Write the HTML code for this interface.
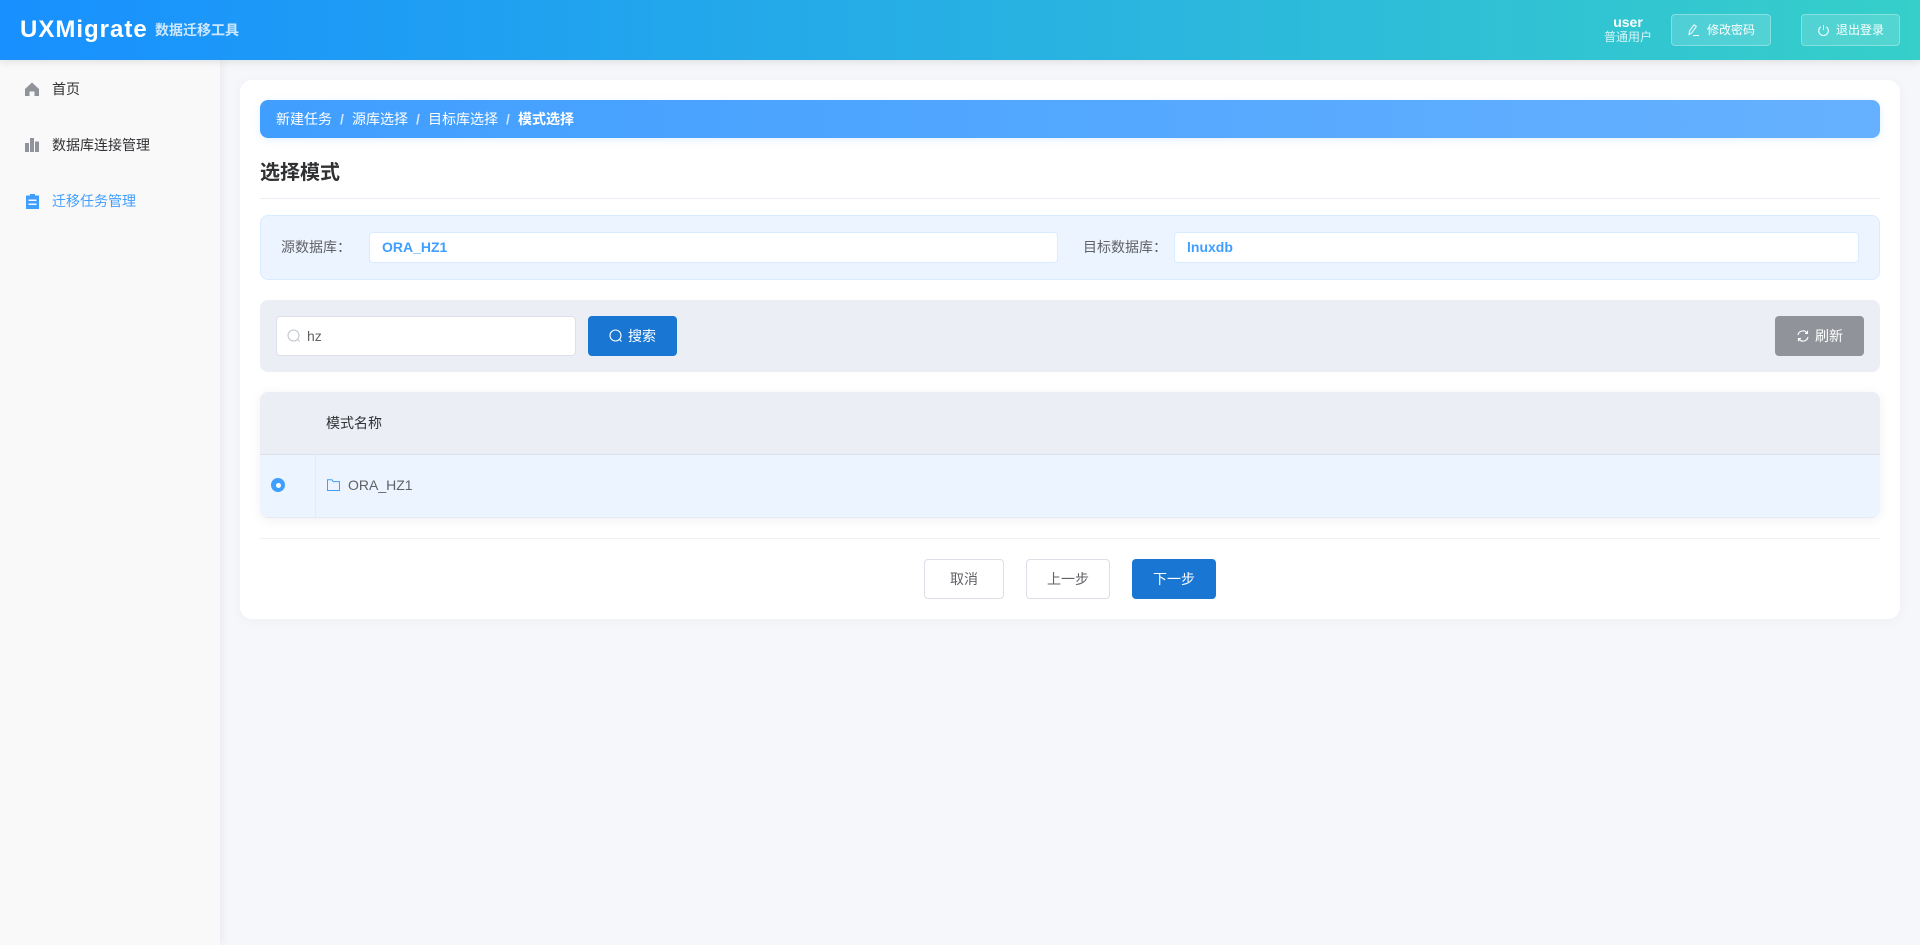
<!DOCTYPE html>
<html lang="zh">
<head>
<meta charset="utf-8">
<title>UXMigrate</title>
<style>
*{box-sizing:border-box;margin:0;padding:0}
html,body{width:1920px;height:945px;overflow:hidden}
body{position:relative;background:#f5f7fa;font-family:"Liberation Sans","Noto Sans CJK SC",sans-serif;font-size:14px;color:#303133}
.a{position:absolute}
.t{position:absolute;white-space:nowrap;line-height:20px}
svg{display:block}
.hdr{left:0;top:0;width:1920px;height:60px;background:linear-gradient(90deg,#1890ff,#36cfc9);box-shadow:0 2px 8px rgba(0,0,0,.1);z-index:3}
.side{left:0;top:60px;width:220px;height:885px;background:#f9f9fa;box-shadow:2px 0 8px rgba(0,0,0,.06);z-index:2}
.hbtn{position:absolute;top:14px;height:32px;background:rgba(255,255,255,.15);border:1px solid rgba(255,255,255,.3);border-radius:4px}
.card{left:240px;top:80px;width:1660px;height:539px;background:#fff;border-radius:12px;box-shadow:0 2px 12px rgba(0,0,0,.04)}
.btn{position:absolute;border-radius:4px;font-size:14px;line-height:20px}
</style>
</head>
<body>
<div class="a hdr">
  <div class="t" style="left:20px;top:15px;font-size:24px;line-height:30px;font-weight:700;color:#fff;letter-spacing:1px">UXMigrate</div>
  <div class="t" style="left:155px;top:20px;font-size:14px;color:rgba(255,255,255,.78);font-weight:700">数据迁移工具</div>
  <div class="t" style="left:1588px;width:80px;text-align:center;top:12px;font-size:14px;font-weight:700;color:#fff">user</div>
  <div class="t" style="left:1588px;width:80px;text-align:center;top:27px;font-size:12px;color:rgba(255,255,255,.8)">普通用户</div>
  <div class="hbtn" style="left:1671px;width:100px">
    <svg class="a" style="left:16px;top:9px" width="12" height="12" viewBox="0 0 12 12" fill="none" stroke="#fff" stroke-width="1"><path d="M1 10.5 1.5 7 6 .8 8.3 2.5 3.8 8.8Z"/><path d="M5 11.5h6"/></svg>
    <div class="t" style="left:35px;top:5px;font-size:12px;color:#fff">修改密码</div>
  </div>
  <div class="hbtn" style="left:1801px;width:99px">
    <svg class="a" style="left:15px;top:9px" width="13" height="13" viewBox="0 0 13 13" fill="none" stroke="#fff" stroke-width="1"><path d="M6.5 1v5"/><path d="M3.7 2.8a4.8 4.8 0 1 0 5.6 0"/></svg>
    <div class="t" style="left:34px;top:5px;font-size:12px;color:#fff">退出登录</div>
  </div>
</div>

<div class="a side">
  <svg class="a" style="left:25px;top:22px" width="14" height="14" viewBox="0 0 14 14" fill="#909399"><path d="M7 .5 14 7V14H9.5V9.5H4.5V14H0V7Z"/></svg>
  <div class="t" style="left:52px;top:19px;color:#303133">首页</div>
  <svg class="a" style="left:25px;top:78px" width="14" height="14" viewBox="0 0 14 14" fill="#909399"><rect x="0" y="5" width="4" height="9"/><rect x="5" y="0" width="4" height="14"/><rect x="10" y="3.5" width="4" height="10.5"/></svg>
  <div class="t" style="left:52px;top:75px;color:#303133">数据库连接管理</div>
  <svg class="a" style="left:26px;top:134px" width="13" height="15" viewBox="0 0 13 15" fill="#409eff"><path fill-rule="evenodd" d="M4 0H9V1.5H13V15H0V1.5H4ZM2.5 5.5V7H10.5V5.5ZM2.5 9.5V11H10.5V9.5Z"/></svg>
  <div class="t" style="left:52px;top:131px;color:#409eff">迁移任务管理</div>
</div>

<div class="a card"></div>

<div class="a" style="left:260px;top:100px;width:1620px;height:38px;border-radius:8px;background:linear-gradient(90deg,#409eff,#66b1ff);box-shadow:0 2px 8px rgba(64,158,255,.15)"></div>
<div class="t" style="left:276px;top:109px;color:#fff">新建任务</div>
<div class="t" style="left:340px;top:109px;color:rgba(255,255,255,.75);font-weight:700">/</div>
<div class="t" style="left:352px;top:109px;color:#fff">源库选择</div>
<div class="t" style="left:416px;top:109px;color:rgba(255,255,255,.75);font-weight:700">/</div>
<div class="t" style="left:428px;top:109px;color:#fff">目标库选择</div>
<div class="t" style="left:506px;top:109px;color:rgba(255,255,255,.75);font-weight:700">/</div>
<div class="t" style="left:518px;top:109px;color:#fff;font-weight:700">模式选择</div>

<div class="t" style="left:260px;top:158px;font-size:20px;line-height:30px;font-weight:700;color:#303133">选择模式</div>
<div class="a" style="left:260px;top:198px;width:1620px;height:1px;background:#ebeef5"></div>

<div class="a" style="left:260px;top:215px;width:1620px;height:65px;background:#ecf5ff;border:1px solid #d9ecff;border-radius:8px"></div>
<div class="t" style="left:281px;top:237px;color:#606266">源数据库：</div>
<div class="a" style="left:369px;top:232px;width:689px;height:31px;background:#fff;border:1px solid #d9ecff;border-radius:4px"></div>
<div class="t" style="left:382px;top:237px;color:#409eff;font-weight:700">ORA_HZ1</div>
<div class="t" style="left:1083px;top:237px;color:#606266">目标数据库：</div>
<div class="a" style="left:1174px;top:232px;width:685px;height:31px;background:#fff;border:1px solid #d9ecff;border-radius:4px"></div>
<div class="t" style="left:1187px;top:237px;color:#409eff;font-weight:700">lnuxdb</div>

<div class="a" style="left:260px;top:300px;width:1620px;height:72px;background:#ebeef5;border-radius:8px"></div>
<div class="a" style="left:276px;top:316px;width:300px;height:40px;background:#fff;border:1px solid #dcdfe6;border-radius:4px"></div>
<svg class="a" style="left:287px;top:329px" width="14" height="14" viewBox="0 0 14 14" fill="none" stroke="#c0c4cc" stroke-width="1"><circle cx="6.5" cy="6.5" r="5.5"/><path d="M10.5 10.5 12.5 12.5"/></svg>
<div class="t" style="left:307px;top:326px;color:#606266">hz</div>
<div class="btn" style="left:588px;top:316px;width:89px;height:40px;background:#1976d2"></div>
<svg class="a" style="left:609px;top:329px" width="14" height="14" viewBox="0 0 14 14" fill="none" stroke="#fff" stroke-width="1.1"><circle cx="6.5" cy="6.5" r="5.5"/><path d="M10.5 10.5 12.5 12.5"/></svg>
<div class="t" style="left:628px;top:326px;color:#fff">搜索</div>
<div class="btn" style="left:1775px;top:316px;width:89px;height:40px;background:#909399"></div>
<svg class="a" style="left:1797px;top:330px" width="12" height="12" viewBox="0 0 12 12" fill="none" stroke="#fff" stroke-width="1.1"><path d="M1 5A5 5 0 0 1 10 3"/><path d="M11 7A5 5 0 0 1 2 9"/><path d="M10.5 .8V3.4H8"/><path d="M1.5 11.2V8.6H4"/></svg>
<div class="t" style="left:1815px;top:326px;color:#fff">刷新</div>

<div class="a" style="left:260px;top:392px;width:1620px;height:126px;border-radius:8px;overflow:hidden;background:#ecf5ff;box-shadow:0 2px 12px rgba(0,0,0,.06)">
  <div class="a" style="left:0;top:0;width:1620px;height:63px;background:#ebeef5;border-bottom:1px solid #dcdfe6"></div>
  <div class="a" style="left:55px;top:63px;width:1px;height:63px;background:#e4ecf7"></div>
  <div class="a" style="left:0;top:125px;width:1620px;height:1px;background:#e4e9f2"></div>
</div>
<div class="t" style="left:326px;top:413px;color:#303133">模式名称</div>
<div class="a" style="left:271px;top:478px;width:14px;height:14px;border-radius:50%;background:#409eff"></div>
<div class="a" style="left:275.500px;top:482.500px;width:5px;height:5px;border-radius:50%;background:#fff"></div>
<svg class="a" style="left:327px;top:479px" width="13" height="12" viewBox="0 0 13 12" fill="none" stroke="#409eff" stroke-width="1"><path d="M.5 11.5V.8H5L6.2 2.6H12.5V11.5Z"/></svg>
<div class="t" style="left:348px;top:475px;color:#606266">ORA_HZ1</div>

<div class="a" style="left:260px;top:538px;width:1620px;height:1px;background:#f0f1f6"></div>
<div class="btn" style="left:924px;top:559px;width:80px;height:40px;background:#fff;border:1px solid #dcdfe6"></div>
<div class="t" style="left:950px;top:569px;color:#606266">取消</div>
<div class="btn" style="left:1026px;top:559px;width:84px;height:40px;background:#fff;border:1px solid #dcdfe6"></div>
<div class="t" style="left:1047px;top:569px;color:#606266">上一步</div>
<div class="btn" style="left:1132px;top:559px;width:84px;height:40px;background:#1976d2"></div>
<div class="t" style="left:1153px;top:569px;color:#fff">下一步</div>
</body>
</html>
